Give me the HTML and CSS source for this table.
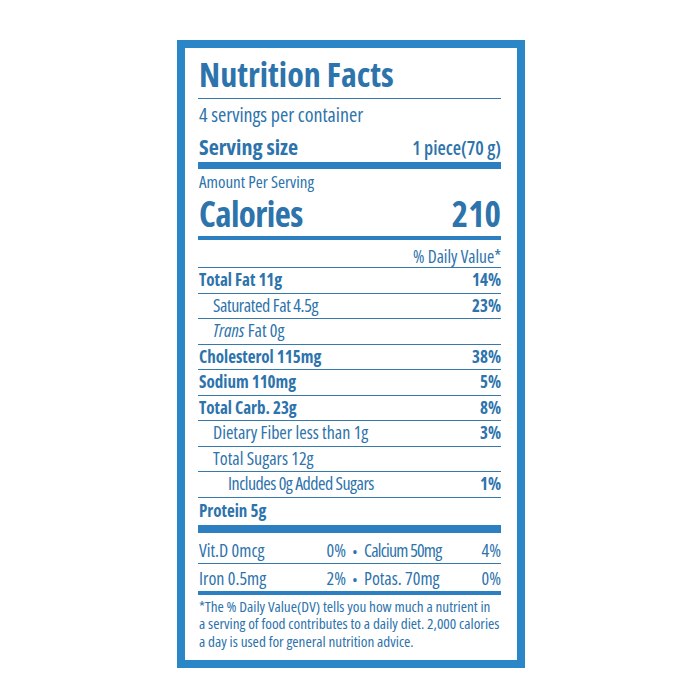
FILE: index.html
```html
<!DOCTYPE html>
<html lang="en">
<head>
<meta charset="utf-8">
<title>Nutrition Facts</title>
<link rel="stylesheet" href="styles.css">
</head>
<body>
<div class="label">
  <h1 class="title">Nutrition Facts</h1>
  <div class="servings">4 servings per container</div>
  <div class="line serving"><span class="b">Serving size</span><span class="sv">1 piece(70 g)</span></div>
  <div class="amount">Amount Per Serving</div>
  <div class="line calories"><span class="cal">Calories</span><span>210</span></div>
  <div class="dv">% Daily Value*</div>
  <div class="line nut"><span class="b">Total Fat 11g</span><span class="b">14%</span></div>
  <div class="line nut ind1"><span class="reg sat">Saturated Fat 4.5g</span><span class="b">23%</span></div>
  <div class="line nut ind1"><span class="reg"><i>Trans</i> Fat 0g</span></div>
  <div class="line nut"><span class="b">Cholesterol 115mg</span><span class="b">38%</span></div>
  <div class="line nut"><span class="b">Sodium 110mg</span><span class="b">5%</span></div>
  <div class="line nut"><span class="b">Total Carb. 23g</span><span class="b">8%</span></div>
  <div class="line nut ind1"><span class="reg">Dietary Fiber less than 1g</span><span class="b">3%</span></div>
  <div class="line nut ind1"><span class="reg">Total Sugars 12g</span></div>
  <div class="line nut ind2"><span class="reg tight">Includes 0g Added Sugars</span><span class="b">1%</span></div>
  <div class="line protein"><span class="b">Protein 5g</span></div>
  <div class="vit vit1">
    <div class="half left"><span>Vit.D 0mcg</span><span>0%</span></div>
    <span class="dot">•</span>
    <div class="half right"><span class="tighter">Calcium 50mg</span><span>4%</span></div>
  </div>
  <div class="vit vit2">
    <div class="half left"><span>Iron 0.5mg</span><span>2%</span></div>
    <span class="dot">•</span>
    <div class="half right"><span>Potas. 70mg</span><span>0%</span></div>
  </div>
  <p class="foot">*The % Daily Value(DV) tells you how much a nutrient in<br>a serving of food contributes to a daily diet. 2,000 calories<br>a day is used for general nutrition advice.</p>
</div>
</body>
</html>
```

FILE: styles.css
```css
* { box-sizing: border-box; }
html, body { margin: 0; padding: 0; background: #ffffff; }
body {
  font-family: "Open Sans", "Roboto Condensed", sans-serif;
  font-stretch: 75%;
  color: #2d73ac;
}
.label {
  width: 348px;
  margin: 40px 0 0 177px;
  border: 8px solid #2b86c7;
  padding: 0 16px 10px 13px;
}
.title {
  margin: 0;
  padding: 6px 0 4px 1px;
  font-size: 34px;
  line-height: 40px;
  font-weight: bold;
  border-bottom: 1px solid #3579ad;
}
.servings {
  padding: 4px 0 0 1px;
  font-size: 20px;
  line-height: 24px;
}
.line {
  display: flex;
  justify-content: space-between;
  align-items: baseline;
  padding-left: 1px;
}
.b { font-weight: bold; }
.serving {
  padding-top: 5px;
  font-size: 22px;
  line-height: 28px;
  border-bottom: 7px solid #2c80c1;
}
.sv { font-size: 19px; font-weight: 600; }
.amount {
  padding: 3px 0 0 1px;
  font-size: 17px;
  line-height: 19px;
}
.calories {
  padding-top: 3px;
  padding-bottom: 2px;
  font-size: 35px;
  line-height: 40px;
  font-weight: bold;
  border-bottom: 4px solid #2c80c1;
}
.cal { letter-spacing: -0.6px; }
.dv {
  padding-top: 6px;
  font-size: 17.5px;
  line-height: 21px;
  text-align: right;
  border-bottom: 1px solid #3579ad;
}
.nut {
  height: 25.56px;
  font-size: 17px;
  line-height: 23.56px;
  border-bottom: 1px solid #3579ad;
}
.reg { font-size: 18px; }
.sat { letter-spacing: -0.4px; }
.tight { letter-spacing: -0.5px; }
.tighter { letter-spacing: -0.8px; }
.ind1 { padding-left: 15px; }
.ind2 { padding-left: 30px; }
.protein {
  height: 35px;
  font-size: 17px;
  line-height: 26px;
  border-bottom: 8px solid #2c80c1;
}
.vit {
  display: flex;
  align-items: baseline;
  font-size: 18px;
  padding-left: 1px;
}
.vit1 {
  padding-top: 6px;
  line-height: 23px;
  border-bottom: 1px solid #3579ad;
}
.vit2 {
  padding-top: 3px;
  line-height: 23px;
  border-bottom: 4px solid #2c80c1;
}
.half {
  display: flex;
  justify-content: space-between;
}
.left { width: 147px; }
.dot { width: 18px; text-align: center; font-size: 14px; }
.right { flex: 1; }
.foot {
  margin: 0;
  padding: 3px 0 0 1px;
  font-size: 15.2px;
  line-height: 17.5px;
  white-space: nowrap;
}
```
